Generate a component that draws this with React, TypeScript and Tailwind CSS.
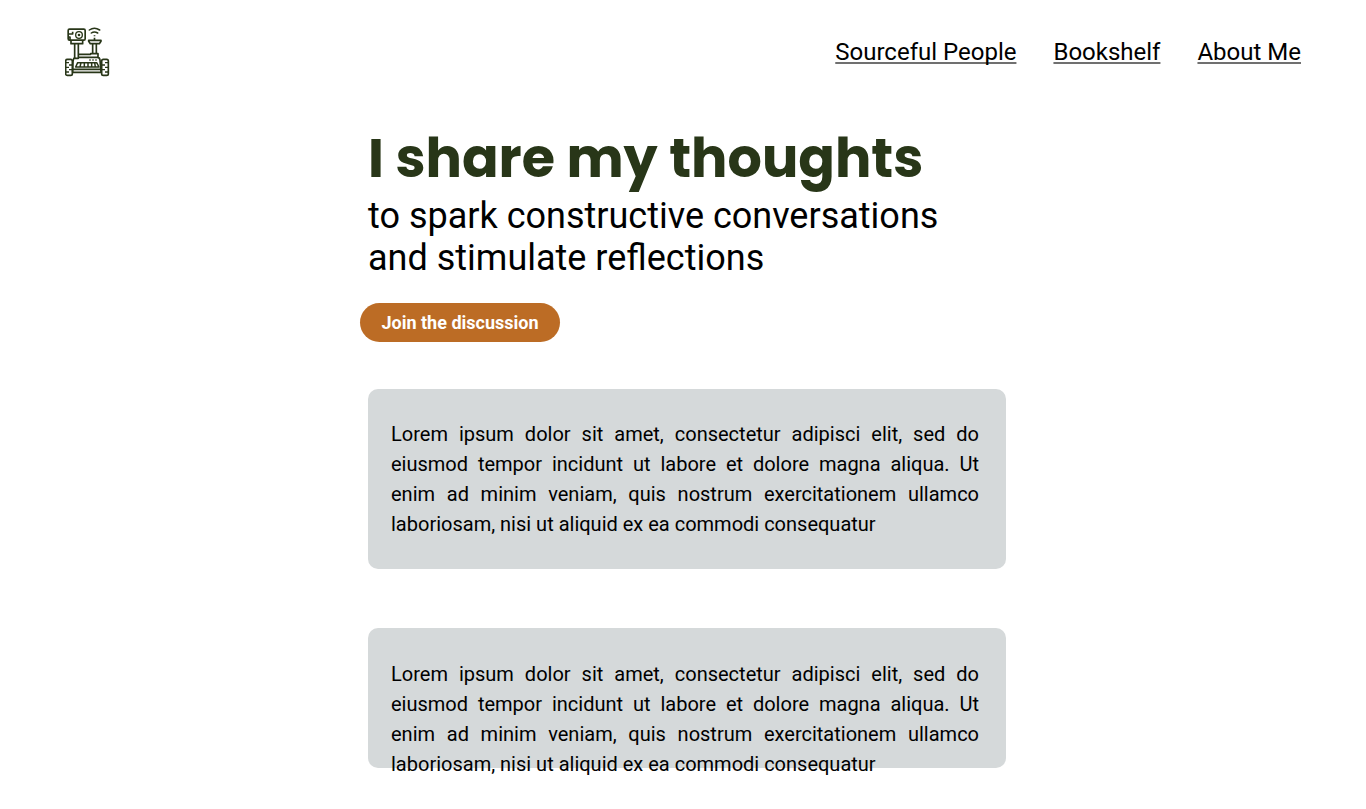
const links = ["Sourceful People", "Bookshelf", "About Me"];

const excerpt =
  "Lorem ipsum dolor sit amet, consectetur adipisci elit, sed do eiusmod tempor incidunt ut labore et dolore magna aliqua. Ut enim ad minim veniam, quis nostrum exercitationem ullamco laboriosam, nisi ut aliquid ex ea commodi consequatur";

function RoverLogo() {
  return (
    <svg viewBox="16 16 138 150" className="h-[50px] w-[46px]" fill="none" stroke="#283618" strokeWidth="5" strokeLinejoin="round" aria-hidden="true">
      {/* camera head */}
      <rect x="25.500" y="22.500" width="51" height="33" rx="4" />
      <path d="M25 37h14v-7M25 46h6v9" />
      <circle cx="58" cy="40" r="10" strokeWidth="4" />
      <circle cx="58" cy="40" r="4" fill="#283618" stroke="none" />
      <path d="M34 56v10h35V56M45 66v44h11V66" />
      {/* antenna */}
      <path d="M89 25q15-10 31 0M95 34q9-6 19 0" strokeLinecap="round" strokeWidth="4.500" />
      <path d="M104.500 41v3M104.500 48v8M87 56h37v3l-5 7H92l-5-7zM99 67v29M110 67v29" />
      {/* body */}
      <path d="M57 98h36v-2h22v10M57 107h56q7 0 8 8l3 36M46 107q-5 3-6 12l-1 32" />
      <path d="M89 115h4M98 115h4M107 115h4" />
      <path d="M48 136l6-13h57l7 13zM64 123l-3 13M74 123v13M85 123v13M96 123v13M105 123l2 13" strokeWidth="4.500" />
      <path d="M37 143h90M37 152h90" />
      {/* wheels */}
      <rect x="18" y="113" width="20" height="48" rx="5" />
      <rect x="126" y="113" width="20" height="48" rx="5" />
      <path d="M18 123h10M28 130h9M18 137h10M28 144h9M18 151h10M136 123h10M127 130h9M136 137h10M127 144h9M136 151h10" strokeWidth="4" />
    </svg>
  );
}

export default function App() {
  return (
    <div className="bg-white font-[Roboto,sans-serif] text-black">
      <header className="flex items-center justify-between px-[65px] pt-[27px]">
        <a href="#home" aria-label="Home">
          <RoverLogo />
        </a>
        <nav className="flex gap-[37px] text-2xl">
          {links.map((label) => (
            <a key={label} href="#" className="underline decoration-[#707070] decoration-2 underline-offset-2 [text-decoration-skip-ink:none]">
              {label}
            </a>
          ))}
        </nav>
      </header>
      <main className="mx-auto max-w-[646px] pt-11 pl-2">
        <h1 className="font-[Poppins,Inter,sans-serif] text-[54px] leading-[74px] font-bold text-[#283618]">
          I share my thoughts
        </h1>
        <p className="text-4xl leading-[42px]">
          to spark constructive conversations
          <br />
          and stimulate reflections
        </p>
        <button type="button" className="-ml-2 mt-6 h-[39px] w-[200px] rounded-full bg-[#bc6c25] text-lg font-bold text-white">
          Join the discussion
        </button>
        <article className="mt-[47px] rounded-[10px] bg-[#d5d9da] py-[30px] pr-[27px] pl-[23px]">
          <p className="text-justify text-xl leading-[30px]">{excerpt}</p>
        </article>
        <article className="mt-[59px] mb-10 h-[140px] rounded-[10px] bg-[#d5d9da] pt-[31px] pr-[27px] pl-[23px]">
          <p className="text-justify text-xl leading-[30px]">{excerpt}</p>
        </article>
      </main>
    </div>
  );
}
